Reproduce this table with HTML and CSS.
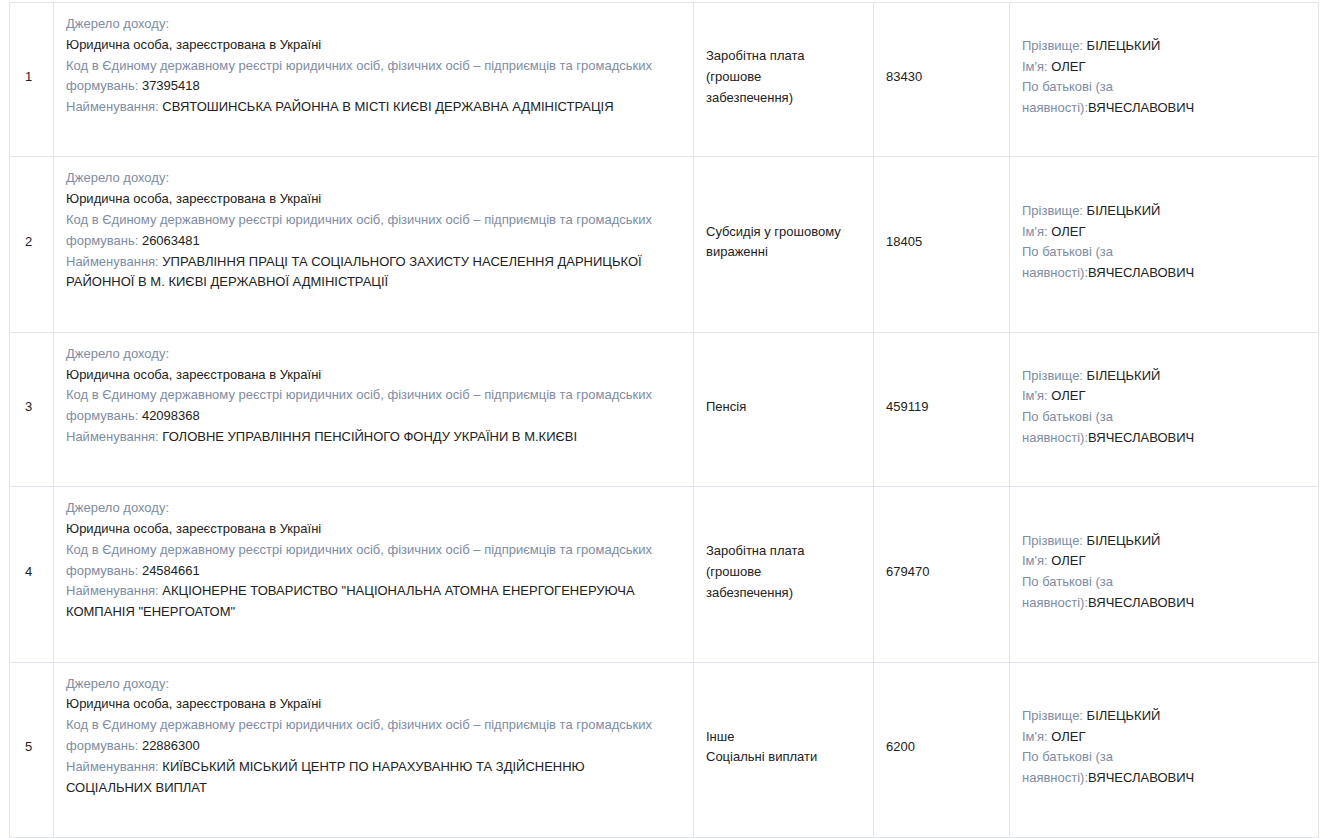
FILE: index.html
```html
<!DOCTYPE html>
<html lang="uk">
<head>
<meta charset="utf-8">
<title>Доходи</title>
<link rel="stylesheet" href="styles.css">
</head>
<body>
<div class="page">
<table class="income">
  <colgroup>
    <col class="c-num">
    <col class="c-src">
    <col class="c-type">
    <col class="c-sum">
    <col class="c-person">
  </colgroup>
  <tbody>
    <tr>
      <td class="num">1</td>
      <td class="src">
        <div class="block">
          <div><span class="lbl">Джерело доходу:</span></div>
          <div>Юридична особа, зареєстрована в Україні</div>
          <div><span class="lbl">Код в Єдиному державному реєстрі юридичних осіб, фізичних осіб – підприємців та громадських формувань:</span> 37395418</div>
          <div><span class="lbl">Найменування:</span> СВЯТОШИНСЬКА РАЙОННА В МІСТІ КИЄВІ ДЕРЖАВНА АДМІНІСТРАЦІЯ</div>
        </div>
      </td>
      <td class="type"><div class="narrow">Заробітна плата (грошове забезпечення)</div></td>
      <td class="sum">83430</td>
      <td class="person">
        <div class="pblock">
          <div><span class="lbl">Прізвище:</span> БІЛЕЦЬКИЙ</div>
          <div><span class="lbl">Ім'я:</span> ОЛЕГ</div>
          <div><span class="lbl">По батькові (за наявності):</span>ВЯЧЕСЛАВОВИЧ</div>
        </div>
      </td>
    </tr>
    <tr>
      <td class="num">2</td>
      <td class="src">
        <div class="block">
          <div><span class="lbl">Джерело доходу:</span></div>
          <div>Юридична особа, зареєстрована в Україні</div>
          <div><span class="lbl">Код в Єдиному державному реєстрі юридичних осіб, фізичних осіб – підприємців та громадських формувань:</span> 26063481</div>
          <div><span class="lbl">Найменування:</span> УПРАВЛІННЯ ПРАЦІ ТА СОЦІАЛЬНОГО ЗАХИСТУ НАСЕЛЕННЯ ДАРНИЦЬКОЇ РАЙОННОЇ В М. КИЄВІ ДЕРЖАВНОЇ АДМІНІСТРАЦІЇ</div>
        </div>
      </td>
      <td class="type"><div class="narrow">Субсидія у грошовому вираженні</div></td>
      <td class="sum">18405</td>
      <td class="person">
        <div class="pblock">
          <div><span class="lbl">Прізвище:</span> БІЛЕЦЬКИЙ</div>
          <div><span class="lbl">Ім'я:</span> ОЛЕГ</div>
          <div><span class="lbl">По батькові (за наявності):</span>ВЯЧЕСЛАВОВИЧ</div>
        </div>
      </td>
    </tr>
    <tr>
      <td class="num">3</td>
      <td class="src">
        <div class="block">
          <div><span class="lbl">Джерело доходу:</span></div>
          <div>Юридична особа, зареєстрована в Україні</div>
          <div><span class="lbl">Код в Єдиному державному реєстрі юридичних осіб, фізичних осіб – підприємців та громадських формувань:</span> 42098368</div>
          <div><span class="lbl">Найменування:</span> ГОЛОВНЕ УПРАВЛІННЯ ПЕНСІЙНОГО ФОНДУ УКРАЇНИ В М.КИЄВІ</div>
        </div>
      </td>
      <td class="type"><div class="narrow">Пенсія</div></td>
      <td class="sum">459119</td>
      <td class="person">
        <div class="pblock">
          <div><span class="lbl">Прізвище:</span> БІЛЕЦЬКИЙ</div>
          <div><span class="lbl">Ім'я:</span> ОЛЕГ</div>
          <div><span class="lbl">По батькові (за наявності):</span>ВЯЧЕСЛАВОВИЧ</div>
        </div>
      </td>
    </tr>
    <tr>
      <td class="num">4</td>
      <td class="src">
        <div class="block">
          <div><span class="lbl">Джерело доходу:</span></div>
          <div>Юридична особа, зареєстрована в Україні</div>
          <div><span class="lbl">Код в Єдиному державному реєстрі юридичних осіб, фізичних осіб – підприємців та громадських формувань:</span> 24584661</div>
          <div><span class="lbl">Найменування:</span> АКЦІОНЕРНЕ ТОВАРИСТВО "НАЦІОНАЛЬНА АТОМНА ЕНЕРГОГЕНЕРУЮЧА КОМПАНІЯ "ЕНЕРГОАТОМ"</div>
        </div>
      </td>
      <td class="type"><div class="narrow">Заробітна плата (грошове забезпечення)</div></td>
      <td class="sum">679470</td>
      <td class="person">
        <div class="pblock">
          <div><span class="lbl">Прізвище:</span> БІЛЕЦЬКИЙ</div>
          <div><span class="lbl">Ім'я:</span> ОЛЕГ</div>
          <div><span class="lbl">По батькові (за наявності):</span>ВЯЧЕСЛАВОВИЧ</div>
        </div>
      </td>
    </tr>
    <tr>
      <td class="num">5</td>
      <td class="src">
        <div class="block">
          <div><span class="lbl">Джерело доходу:</span></div>
          <div>Юридична особа, зареєстрована в Україні</div>
          <div><span class="lbl">Код в Єдиному державному реєстрі юридичних осіб, фізичних осіб – підприємців та громадських формувань:</span> 22886300</div>
          <div><span class="lbl">Найменування:</span> КИЇВСЬКИЙ МІСЬКИЙ ЦЕНТР ПО НАРАХУВАННЮ ТА ЗДІЙСНЕННЮ СОЦІАЛЬНИХ ВИПЛАТ</div>
        </div>
      </td>
      <td class="type"><div class="narrow">Інше<br>Соціальні виплати</div></td>
      <td class="sum">6200</td>
      <td class="person">
        <div class="pblock">
          <div><span class="lbl">Прізвище:</span> БІЛЕЦЬКИЙ</div>
          <div><span class="lbl">Ім'я:</span> ОЛЕГ</div>
          <div><span class="lbl">По батькові (за наявності):</span>ВЯЧЕСЛАВОВИЧ</div>
        </div>
      </td>
    </tr>
  </tbody>
</table>
</div>
</body>
</html>
```

FILE: styles.css
```css
html, body {
  margin: 0;
  padding: 0;
  background: #ffffff;
}

body {
  font-family: "Liberation Sans", Arial, sans-serif;
  font-size: 13px;
  line-height: 20.8px;
  color: #222222;
}

.page {
  padding: 2px 0 0 9px;
}

.income {
  border-collapse: collapse;
  table-layout: fixed;
  width: 1309px;
}

.c-num { width: 44px; }
.c-src { width: 640px; }
.c-type { width: 180px; }
.c-sum { width: 136px; }
.c-person { width: 309px; }

.income td {
  border: 1px solid #e1e4ea;
  padding: 11px 12px 15.5px 12px;
  vertical-align: middle;
  text-align: left;
}

.income td.num {
  padding-left: 15px;
}

.block {
  max-width: 592px;
  margin-bottom: 23px;
}

.narrow {
  max-width: 135px;
}

.pblock {
  max-width: 240px;
}

.lbl {
  color: #7e8ca4;
}
```
